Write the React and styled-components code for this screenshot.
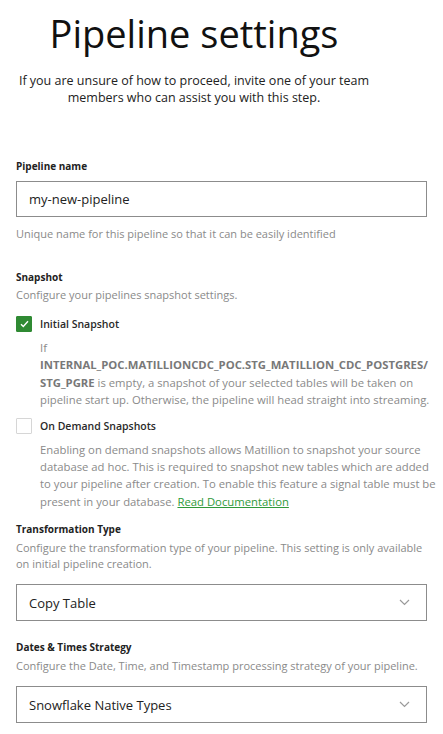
import React, { useState } from "react";
import styled, { createGlobalStyle } from "styled-components";

const GlobalStyle = createGlobalStyle`
  * { box-sizing: border-box; }
  body {
    margin: 0;
    background: #fff;
    font-family: "Open Sans", "Liberation Sans", sans-serif;
    color: #222;
  }
`;

const Page = styled.div`
  width: 443px;
  padding: 0 16px 12px 16px;
`;

const Header = styled.div`
  padding-right: 55px;
  text-align: center;
`;

const Title = styled.h1`
  margin: 0;
  padding-top: 8px;
  font-size: 38px;
  font-weight: 500;
  line-height: 50px;
  color: #111;
`;

const Subtitle = styled.p`
  margin: 14px 0 0;
  font-size: 12.5px;
  line-height: 17px;
  font-weight: 500;
  color: #222;
`;

const Section = styled.div`
  margin-top: ${(p) => p.gap || 0}px;
`;

const Label = styled.div`
  font-size: 10px;
  font-weight: 700;
  line-height: 14px;
  color: #222;
`;

const Hint = styled.div`
  font-size: 11px;
  line-height: 16px;
  color: #8a8a8a;
  margin-top: ${(p) => p.top || 0}px;
`;

const Field = styled.div`
  margin-top: ${(p) => p.top || 8}px;
  height: ${(p) => p.h || 37}px;
  border: 1px solid #8c8c8c;
  display: flex;
  align-items: center;
  justify-content: space-between;
  padding: 0 16px 0 12px;
  font-size: 13px;
  font-weight: 500;
  color: #222;
`;

const CheckRow = styled.label`
  display: flex;
  align-items: center;
  gap: 8px;
  height: 16px;
  margin-top: ${(p) => p.top || 0}px;
  font-size: 10.5px;
  font-weight: 600;
  color: #2a2a2a;
  cursor: pointer;
`;

const Box = styled.span`
  width: 16px;
  height: 16px;
  display: flex;
  align-items: center;
  justify-content: center;
  background: ${(p) => (p.checked ? "#2f8a33" : "#fff")};
  border: 1px solid ${(p) => (p.checked ? "#2f8a33" : "#d6d6d6")};
  border-radius: 1px;
`;

const Description = styled.p`
  margin: 7px -12px 0 24px;
  font-size: 11.3px;
  line-height: 17.4px;
  color: #8a8a8a;

  strong {
    color: #787878;
    font-weight: 700;
  }
`;

const DocLink = styled.a`
  color: #2f9a3a;
  text-decoration: underline;
`;

function Chevron() {
  return (
    <svg width="11" height="7" viewBox="0 0 11 7" fill="none">
      <path d="M1 1l4.5 4.5L10 1" stroke="#9a9a9a" strokeWidth="1.2" />
    </svg>
  );
}

function Check() {
  return (
    <svg width="9" height="8" viewBox="0 0 9 8" fill="none">
      <path d="M1 4.2l2.3 2.3L8 1.3" stroke="#fff" strokeWidth="1.4" />
    </svg>
  );
}

export default function App() {
  const [initial, setInitial] = useState(true);
  const [onDemand, setOnDemand] = useState(false);

  return (
    <Page>
      <GlobalStyle />
      <Header>
        <Title>Pipeline settings</Title>
        <Subtitle>
          If you are unsure of how to proceed, invite one of your team
          <br />
          members who can assist you with this step.
        </Subtitle>
      </Header>

      <Section gap={53}>
        <Label>Pipeline name</Label>
        <Field top={8} h={36}>my-new-pipeline</Field>
        <Hint top={9}>Unique name for this pipeline so that it can be easily identified</Hint>
      </Section>

      <Section gap={28}>
        <Label>Snapshot</Label>
        <Hint top={3}>Configure your pipelines snapshot settings.</Hint>
        <CheckRow top={13} onClick={() => setInitial(!initial)}>
          <Box checked={initial}>{initial && <Check />}</Box>
          Initial Snapshot
        </CheckRow>
        <Description>
          If
          <br />
          <strong>INTERNAL_POC.MATILLIONCDC_POC.STG_MATILLION_CDC_POSTGRES/</strong>
          <br />
          <strong>STG_PGRE</strong> is empty, a snapshot of your selected
          tables will be taken on pipeline start up. Otherwise, the pipeline
          will head straight into streaming.
        </Description>
        <CheckRow top={9} onClick={() => setOnDemand(!onDemand)}>
          <Box checked={onDemand}>{onDemand && <Check />}</Box>
          On Demand Snapshots
        </CheckRow>
        <Description>
          Enabling on demand snapshots allows Matillion to snapshot your source
          database ad hoc. This is required to snapshot new tables which are
          added to your pipeline after creation. To enable this feature a signal
          table must be present in your database.{" "}
          <DocLink href="#">Read Documentation</DocLink>
        </Description>
      </Section>

      <Section gap={12}>
        <Label>Transformation Type</Label>
        <Hint top={4}>
          Configure the transformation type of your pipeline. This setting is
          only available on initial pipeline creation.
        </Hint>
        <Field top={12}>
          Copy Table
          <Chevron />
        </Field>
      </Section>

      <Section gap={19}>
        <Label>Dates &amp; Times Strategy</Label>
        <Hint top={4}>
          Configure the Date, Time, and Timestamp processing strategy of your pipeline.
        </Hint>
        <Field top={12}>
          Snowflake Native Types
          <Chevron />
        </Field>
      </Section>
    </Page>
  );
}
